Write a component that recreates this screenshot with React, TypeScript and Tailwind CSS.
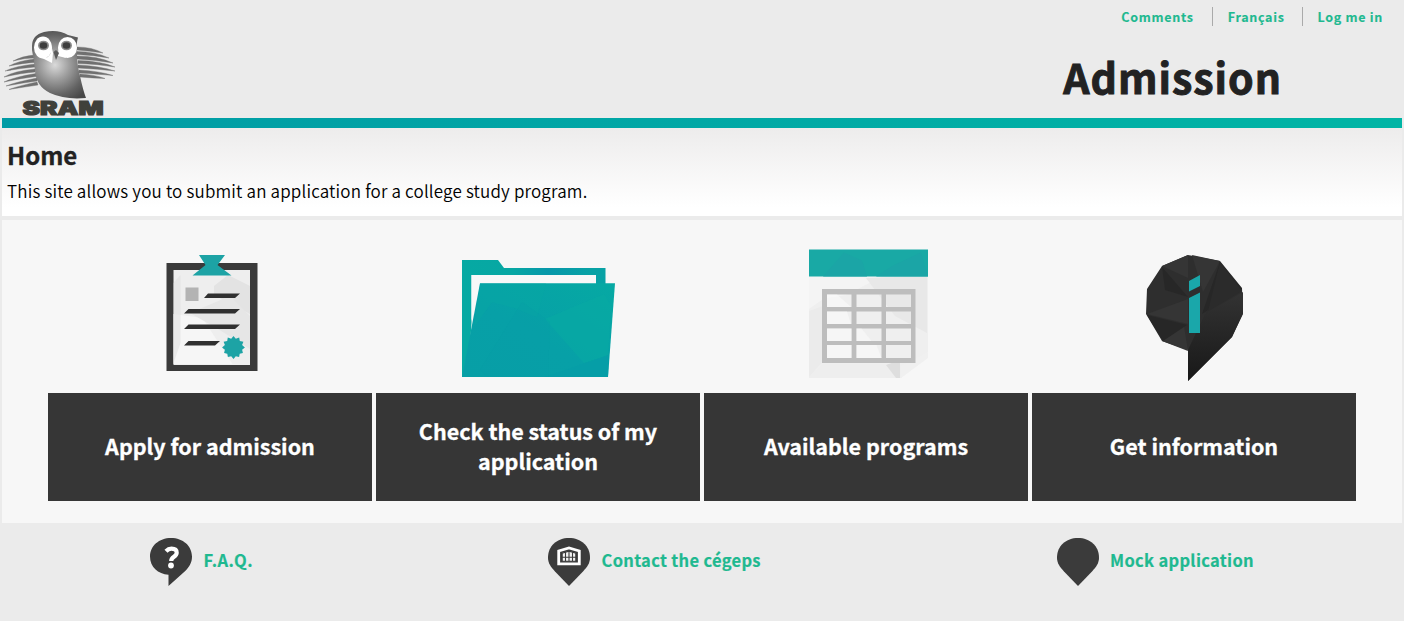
import React from 'react';

function Logo() {
  const left = [
    'M34 55 Q22 56 13 61 Q25 58 34 58Z',
    'M34 59 Q18 61 9 66 Q24 63 34 62.500Z',
    'M35 64 Q16 66 5 71 Q22 68 35 67Z',
    'M35 69 Q14 71 4 77 Q22 73 35 72Z',
    'M36 73.500 Q14 77 4 82 Q22 78 36 76.500Z',
    'M37 78 Q16 82 6 86 Q22 83 37 81Z',
    'M37 82 Q18 86 9 89.500 Q24 87 38 85Z',
  ];
  const right = [
    'M77 47 Q92 47 103 53 Q90 51 77 50Z',
    'M77 51.500 Q95 51.500 109 58 Q93 55 77 54.500Z',
    'M77 56 Q98 56 113 63 Q96 60 77 59Z',
    'M78 60.500 Q101 61 115 67 Q98 64 78 63.500Z',
    'M78 65 Q100 66 115 71 Q98 69 78 68Z',
    'M79 70 Q99 71 113 75.500 Q98 74 79 73Z',
    'M80 74 Q96 75 105 78.500 Q92 78 80 77Z',
  ];
  return (
    <svg className="block" width="120" height="98" viewBox="0 26 120 98" role="img" aria-label="SRAM">
      <defs>
        <radialGradient id="owl" cx="55" cy="65" r="40" gradientUnits="userSpaceOnUse">
          <stop offset="0" stopColor="#dadada" />
          <stop offset="0.35" stopColor="#a0a0a0" />
          <stop offset="0.75" stopColor="#636363" />
          <stop offset="1" stopColor="#474747" />
        </radialGradient>
      </defs>
      <g fill="#707070" stroke="#707070" strokeWidth="0.4">
        {left.map((d) => <path key={d} d={d} />)}
        {right.map((d) => <path key={d} d={d} />)}
      </g>
      <path fill="url(#owl)" d="M32 46 Q32 35 44 32 Q58 29 68 35 L78 37.500 Q76 44 77 54 Q77 64 80 76 Q83 90 86 98 Q65 100 50 93 Q36 86 35 71 Q34 60 32 50Z" />
      <ellipse cx="43" cy="47.500" rx="9" ry="11" fill="#fff" />
      <path fill="#fff" d="M42 58 Q53 59 51 44 L53 53 L52 63Z" />
      <ellipse cx="67.500" cy="47.500" rx="9.500" ry="10.500" fill="#fff" />
      <path fill="#fff" d="M59 44 L58 56 L66 58Z" />
      <ellipse cx="43.500" cy="45.500" rx="5.500" ry="4.800" fill="#8b8b8b" />
      <ellipse cx="66.500" cy="45.500" rx="5.500" ry="4.800" fill="#8b8b8b" />
      <ellipse cx="43.500" cy="45.500" rx="3.800" ry="3.200" fill="#3e3e3e" />
      <ellipse cx="66.500" cy="45.500" rx="3.800" ry="3.200" fill="#3e3e3e" />
      <path fill="#5a5a5a" d="M53.500 52 L56 50 L59 53 L56 60Z" />
      <text x="22.500" y="114.500" fontFamily="Inter, sans-serif" fontWeight="900" fontSize="18.500" textLength="81" lengthAdjust="spacingAndGlyphs" fill="#3f403b" stroke="#3f403b" strokeWidth="1.100">SRAM</text>
    </svg>
  );
}

function ClipboardIcon() {
  return (
    <svg className="block" width="160" height="140" viewBox="130 245 160 140">
      <path fill="#3a3a3a" d="M166.500 263h91v108h-91z" />
      <path fill="#eeeeee" d="M173.500 270h76.500v95h-76.500z" />
      <path fill="#e3e3e3" d="M214 286l14-11 22 11v28l-36-19z" />
      <path fill="#f6f6f6" d="M173.500 314l29 4 30 46h-59z" />
      <path fill="#e6e6e6" d="M190 313l40-17 20 20v33l-32-20z" />
      <path fill="#dddddd" d="M173.500 283l7-8v68l-7 20z" opacity=".5" />
      <path fill="#1da3a5" d="M199 255h26l-7.500 10 14 10.500h-39l13-10.500z" />
      <path fill="#b3b3b3" d="M185.500 287.500h13v13.500h-13z" />
      <path fill="#303030" d="M208 293.500h32l-5 4.500h-31zM188.500 309h51.500l-5 4.500h-51zM188.500 324.500h51.500l-5 4.500h-51zM188.500 341h31.500l-5 4.500h-31z" />
      <path fill="#1da3a5" d="M233.500 336l2.300 2.800 3.400-1.300.6 3.600 3.600.6-1.300 3.400 2.800 2.300-2.800 2.300.8 3.300-3.200.8-.6 3.200-3.300-.8-2.300 2.800-2.300-2.800-3.300.8-.6-3.200-3.200-.8.800-3.300-2.800-2.300 2.800-2.300-1.300-3.400 3.600-.6.600-3.600 3.400 1.300z" />
    </svg>
  );
}

function FolderIcon() {
  return (
    <svg className="block" width="160" height="140" viewBox="458 245 160 140">
      <defs>
        <linearGradient id="folder" x1="0" y1="1" x2="1" y2="0">
          <stop offset="0" stopColor="#079fa6" />
          <stop offset="0.45" stopColor="#07a0a7" />
          <stop offset="1" stopColor="#06a9a3" />
        </linearGradient>
        <linearGradient id="folderBack" x1="0" y1="0" x2="1" y2="0">
          <stop offset="0" stopColor="#06a9a3" />
          <stop offset="0.35" stopColor="#07a7a3" />
          <stop offset="0.6" stopColor="#0798aa" />
          <stop offset="0.9" stopColor="#08a2a5" />
        </linearGradient>
      </defs>
      <path fill="url(#folderBack)" d="M462 260h36l6 8h101.500v25H596v-18H471.500v48L468 377h-6z" />
      <path fill="#f8f8f8" d="M471.500 275H596v9H480l-8.500 37z" />
      <path fill="url(#folder)" d="M480 283.300h135L608 377H462z" />
      <path fill="#08a8a4" d="M480 283.300h66l-9 34-22-9-23-6-18 25z" opacity=".35" />
      <path fill="#08aaa4" d="M545 319l59-25 7 12-3 49-24 8z" opacity=".6" />
      <path fill="#069ca8" d="M609 355l-1 22h-63l29-10z" opacity=".65" />
      <path fill="#079ba8" d="M480 370l42-68 28 20-2 55h-60z" opacity=".25" />
    </svg>
  );
}

function CalendarIcon() {
  return (
    <svg className="block" width="160" height="140" viewBox="786 245 160 140">
      <path fill="#efefef" d="M809 276h119v76l-27 26h-92v-70l14-9z" />
      <path fill="#ebebeb" d="M809 311l14-5v55l-14 16z" />
      <path fill="#f4f4f4" d="M809 276h74l-37 19-23 4-14 10z" />
      <path fill="#e8e8e8" d="M866 278l61-2v57l-32-17z" />
      <path fill="#eeeeee" d="M823 364h66l10 14h-90z" />
      <path fill="#dedede" d="M886 365l10 13h4v-18z" />
      <path fill="#f0f0f0" d="M901 378v-12l27-14v6z" />
      <path fill="#19a9a5" d="M809 249.500h119v27H809z" />
      <path fill="#1ba5a6" d="M823 276.500l21-24 18 8 5 16zM876 276.500l17-11 28-13 7 24z" />
      <path fill="#bdbdbd" fillRule="evenodd" d="M822 289h93.500v74H822zM827 294.500v12.500h24.500v-12.500zM856.500 294.500v12.500h25v-12.500zM886 294.500v12.500h25v-12.500zM827 311.500v12.500h24.500v-12.500zM856.500 311.500v12.500h25v-12.500zM886 311.500v12.500h25v-12.500zM827 328.500v12.500h24.500v-12.500zM856.500 328.500v12.500h25v-12.500zM886 328.500v12.500h25v-12.500zM827 345v13h24.500v-13zM856.500 345v13h25v-13zM886 345v13h25v-13z" />
      <path fill="#fafafa" opacity=".6" d="M827 294.500h10l14 12.500h-24zM827 311.500h20l4 12.500h-24zM827 328.500h24.500v12.500h-24.500zM827 345h24.500v13h-24.500zM856.500 328.500h5l10 12.500h-15zM856.500 345h20l5 13h-25z" />
    </svg>
  );
}

function InfoIcon() {
  return (
    <svg className="block" width="160" height="140" viewBox="1114 245 160 140">
      <defs>
        <linearGradient id="tail" x1="0" y1="0" x2="0" y2="1">
          <stop offset="0" stopColor="#333" />
          <stop offset="1" stopColor="#181818" />
        </linearGradient>
      </defs>
      <path fill="#2e2e2e" d="M1188 255l32 6 22 27 1 26-11 23-44 44v-31l-26-9-16-27 1-25 15-23z" />
      <path fill="#353535" d="M1162 266l26-11v23zM1147 314l41-15v25zM1192 255l28 6-17 31zM1188 351l-26-10 22-15z" />
      <path fill="#272727" d="M1147 315l40 10-24 16zM1162 267l26 30-23-7zM1220 262l22 27-40 25z" />
      <path fill="#2b2b2b" d="M1188 350l19-35 13-53 22 29-35 21z" />
      <path fill="url(#tail)" d="M1188 350l17-36 38-22v21l-11 24-44 44z" />
      <path fill="#1aa7aa" d="M1189 281l11-6v11l-11 5.500zM1189 298l11-5.500v40.500h-11z" />
    </svg>
  );
}

const PIN = 'M21 0C33 0 42 8 42 19.500c0 6-3 9.500-7 14L21 48 7 33.500C3 29 0 25.500 0 19.500 0 8 9 0 21 0Z';

function FaqIcon() {
  return (
    <svg className="block shrink-0" width="42" height="48" viewBox="0 0 42 48">
      <path fill="#3b3b3b" d="M21 0C33 0 42 8 42 18.500c0 6-2.500 10-6.500 14.200L18.500 48V36.700C8 36 0 29 0 18.500 0 8 9 0 21 0Z" />
      <path d="M16 13.200C17.500 11.600 19.300 10.700 21.500 10.700c3.300 0 5.200 1.500 5.200 4 0 4.200-5.500 3.900-5.500 8.300" fill="none" stroke="#fff" strokeWidth="4.200" />
      <circle cx="21" cy="27.500" r="2.900" fill="#fff" />
    </svg>
  );
}

function CegepIcon() {
  return (
    <svg className="block shrink-0" width="42" height="48" viewBox="0 0 42 48">
      <path fill="#3b3b3b" d={PIN} />
      <path fill="none" stroke="#fff" strokeWidth="2.800" d="M10.700 25.800V13L21 10l10.300 3V25.800Z" />
      <path fill="#f3f3f3" d="M14.500 14.800l6.500-1.800 6.500 1.800v8.400h-13z" />
      <path fill="none" stroke="#3b3b3b" strokeWidth="1.100" d="M14 15.200l7-2.100 7 2.100v8H14zM14 19.300h14M17.500 14v9M21 13v10M24.500 14v9" />
    </svg>
  );
}

function PinIcon() {
  return (
    <svg className="block shrink-0" width="42" height="48" viewBox="0 0 42 48">
      <path fill="#3b3b3b" d={PIN} />
    </svg>
  );
}

const cards = [
  { label: 'Apply for admission', Icon: ClipboardIcon },
  { label: 'Check the status of my application', Icon: FolderIcon },
  { label: 'Available programs', Icon: CalendarIcon },
  { label: 'Get information', Icon: InfoIcon },
];

export default function App() {
  return (
    <div className="h-[621px] w-[1404px] overflow-hidden bg-[#ebebeb] px-0.5 font-['Noto_Sans_CJK_SC',sans-serif] text-[#222]">
      <header className="flex h-[118px] justify-between">
        <div className="-ml-0.5 pt-[26px]"><Logo /></div>
        <div className="flex flex-col items-end">
          <nav className="mt-[7px] flex h-[19px] items-center pr-[19px] text-[12.5px] font-bold leading-[19px] tracking-[0.7px] text-[#1fb990] [-webkit-text-stroke:0.15px_#1fb990]">
            <a className="pr-[18px]">Comments</a>
            <a className="border-l border-[#aaa] pr-[17px] pl-[15px]">Français</a>
            <a className="border-l border-[#aaa] pl-[15px]">Log me in</a>
          </nav>
          <h1 className="mt-5 pr-[120px] text-[41px] font-bold leading-[60px] tracking-[1px] [-webkit-text-stroke:0.9px_#222]">Admission</h1>
        </div>
      </header>
      <div className="h-2.5 bg-linear-to-r from-[#009ba5] to-[#00b5a5]" />
      <section className="h-[88px] bg-linear-to-b from-[#edecec] to-white to-90% pl-[5px] pt-[11px]">
        <h2 className="text-[24px] font-bold leading-8 [-webkit-text-stroke:0.3px_#222]">Home</h2>
        <p className="mt-1.5 text-[17px] font-[350] leading-7 tracking-[0.17px] text-black">This site allows you to submit an application for a college study program.</p>
      </section>
      <main className="h-[307px] border-t-4 border-[#ebebeb] bg-[#f7f7f7] px-[46px] pt-[25px]">
        <div className="grid grid-cols-4 gap-1">
          {cards.map(({ label, Icon }) => (
            <a key={label} className="flex flex-col items-center">
              <Icon />
              <span className="mt-2 flex h-[108px] w-full items-center justify-center bg-[#363636] px-8 pb-[3px] text-center text-[21.5px] font-bold leading-[30px] text-white [-webkit-text-stroke:0.3px_white]">{label}</span>
            </a>
          ))}
        </div>
      </main>
      <footer className="flex pl-[148px] pt-[15px] text-[16.5px] font-bold leading-6 tracking-[0.32px] text-[#1fb990] [-webkit-text-stroke:0.2px_#1fb990]">
        <a className="flex w-[398px] items-center gap-[11.5px]"><FaqIcon /><span className="pb-1">F.A.Q.</span></a>
        <a className="flex w-[509px] items-center gap-[11.5px]"><CegepIcon /><span className="pb-1">Contact the cégeps</span></a>
        <a className="flex items-center gap-[11px]"><PinIcon /><span className="pb-1">Mock application</span></a>
      </footer>
    </div>
  );
}
